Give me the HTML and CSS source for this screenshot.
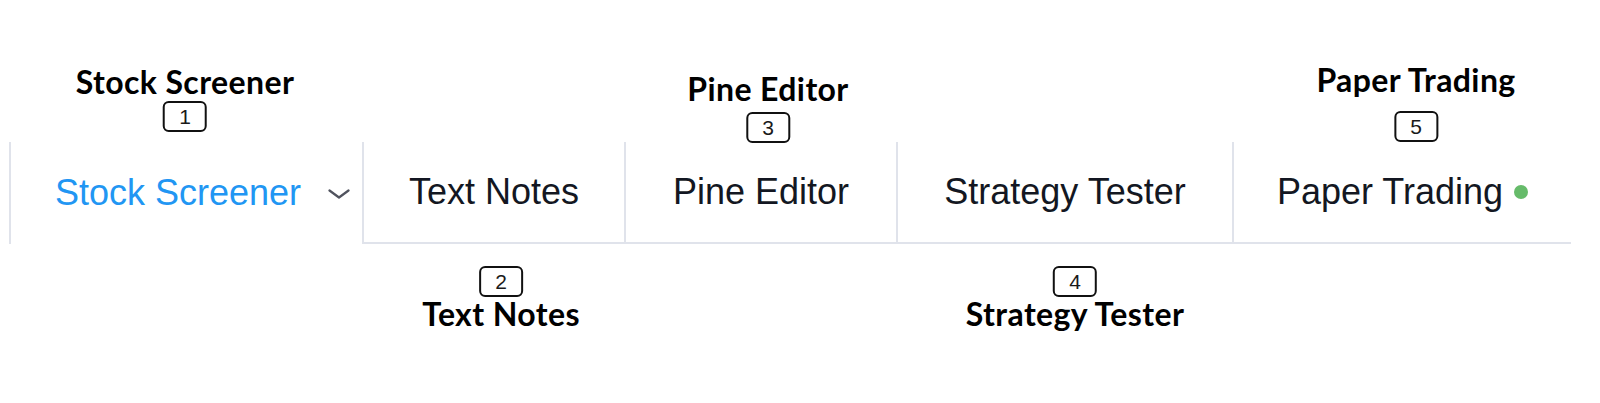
FILE: index.html
```html
<!DOCTYPE html>
<html lang="en">
<head>
<meta charset="utf-8">
<title>Bottom panel tabs</title>
<link rel="stylesheet" href="styles.css">
</head>
<body>
<div class="stage">
  <div class="tabbar">
    <div class="tab tab-active tab-screener">
      <span class="tab-label">Stock Screener</span>
      <svg class="chevron" width="22" height="10" viewBox="0 0 22 10" aria-hidden="true">
        <polyline points="1.5,1.5 11,8.5 20.5,1.5" fill="none" stroke="#50535e" stroke-width="2.2" stroke-linecap="round" stroke-linejoin="round"/>
      </svg>
    </div>
    <div class="tab tab-notes"><span class="tab-label">Text Notes</span></div>
    <div class="tab tab-pine"><span class="tab-label">Pine Editor</span></div>
    <div class="tab tab-strategy"><span class="tab-label">Strategy Tester</span></div>
    <div class="tab tab-paper"><span class="tab-label">Paper Trading</span><span class="status-dot"></span></div>
  </div>

  <div class="callout callout-1">
    <div class="callout-label">Stock Screener</div>
    <div class="badge">1</div>
  </div>
  <div class="callout callout-3">
    <div class="callout-label">Pine Editor</div>
    <div class="badge">3</div>
  </div>
  <div class="callout callout-5">
    <div class="callout-label">Paper Trading</div>
    <div class="badge">5</div>
  </div>
  <div class="callout callout-2">
    <div class="badge">2</div>
    <div class="callout-label">Text Notes</div>
  </div>
  <div class="callout callout-4">
    <div class="badge">4</div>
    <div class="callout-label">Strategy Tester</div>
  </div>
</div>
</body>
</html>
```

FILE: styles.css
```css
* {
  box-sizing: border-box;
}

html, body {
  margin: 0;
  padding: 0;
  background: #ffffff;
}

.stage {
  position: relative;
  width: 1600px;
  height: 403px;
  padding-top: 142px;
  padding-left: 9px;
}

.tabbar {
  display: flex;
  align-items: stretch;
  height: 102px;
  width: 1562px;
}

.tab {
  display: flex;
  align-items: center;
  justify-content: center;
  border-bottom: 2px solid #e0e3eb;
  border-right: 2px solid #e0e3eb;
  font-family: "Liberation Sans", Arial, sans-serif;
  font-size: 36px;
  color: #131722;
  white-space: nowrap;
}

.tab-active {
  border-left: 2px solid #e0e3eb;
  border-bottom: none;
  justify-content: flex-start;
  padding-left: 44px;
  color: #2196f3;
}

.tab-screener { width: 355px; }
.tab-notes { width: 262px; }
.tab-pine { width: 272px; }
.tab-strategy { width: 336px; }
.tab-paper { width: 337px; border-right: none; }

.chevron {
  margin-left: 27px;
  margin-top: 2px;
}

.status-dot {
  width: 14px;
  height: 14px;
  border-radius: 50%;
  background: #66bb6a;
  margin-left: 11px;
}

.callout {
  position: absolute;
  display: flex;
  flex-direction: column;
  align-items: center;
  transform: translateX(-50%);
}

.callout-label {
  font-family: Lato, "Open Sans", sans-serif;
  font-weight: 700;
  font-size: 32px;
  line-height: 32px;
  letter-spacing: 0.4px;
  color: #000000;
  white-space: nowrap;
}

.badge {
  width: 44px;
  height: 31px;
  border: 2px solid #111111;
  border-radius: 6px;
  display: flex;
  align-items: center;
  justify-content: center;
  font-family: "Liberation Sans", Arial, sans-serif;
  font-size: 21px;
  color: #1a1a1a;
}

.callout-1 { left: 185px; top: 66px; gap: 3px; }
.callout-3 { left: 768px; top: 73px; gap: 7px; }
.callout-5 { left: 1416px; top: 64px; gap: 15px; }
.callout-2 { left: 501px; top: 266px; gap: 1px; }
.callout-4 { left: 1075px; top: 266px; gap: 1px; }
```
